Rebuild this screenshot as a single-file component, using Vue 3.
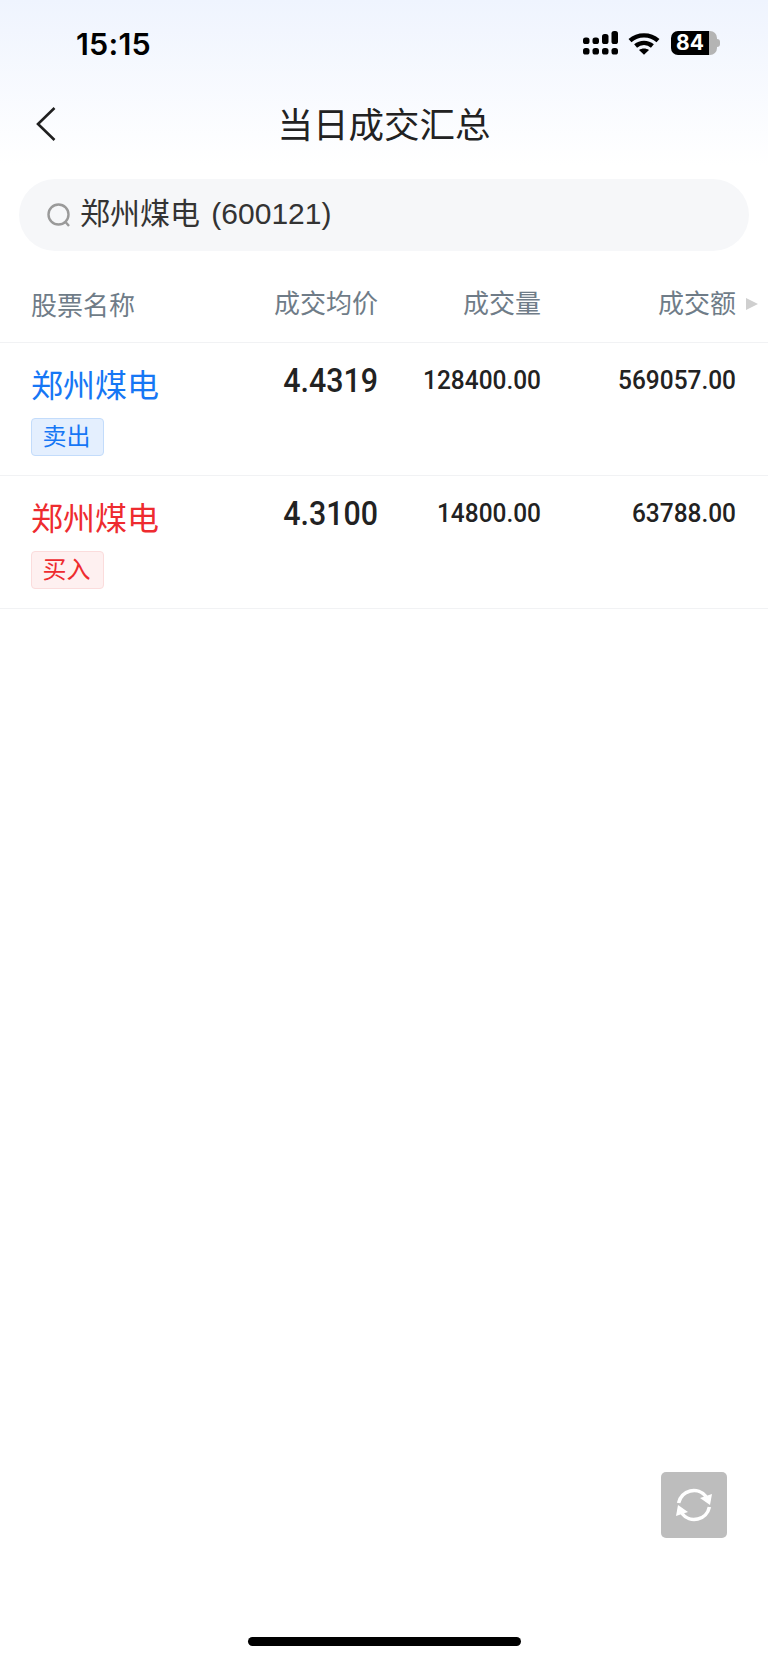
<script setup>
const columns = ["成交均价", "成交量", "成交额"];

const trades = [
  { id: 1, name: "郑州煤电", side: "卖出", type: "sell", price: "4.4319", volume: "128400.00", amount: "569057.00" },
  { id: 2, name: "郑州煤电", side: "买入", type: "buy", price: "4.3100", volume: "14800.00", amount: "63788.00" },
];
</script>

<template>
  <div class="page">
    <div class="status-bar">
      <span class="time">15:15</span>
      <div class="status-icons">
        <svg class="signal" width="36" height="24" viewBox="0 0 36 24" fill="#000">
          <rect x="0" y="6.5" width="6.5" height="6.5" rx="2.6" />
          <rect x="9.5" y="6.5" width="6.5" height="6.5" rx="2.6" />
          <rect x="19" y="3" width="6.5" height="10" rx="2.6" />
          <rect x="28.5" y="0" width="6.5" height="13" rx="2.6" />
          <rect x="0" y="17" width="6.5" height="6.5" rx="2.6" />
          <rect x="9.5" y="17" width="6.5" height="6.5" rx="2.6" />
          <rect x="19" y="17" width="6.5" height="6.5" rx="2.6" />
          <rect x="28.5" y="17" width="6.5" height="6.5" rx="2.6" />
        </svg>
        <svg class="wifi" width="32" height="23" viewBox="0 0 32 23" fill="none" stroke="#000" stroke-width="4.4">
          <path d="M2 8.6C9.8 1.6 22.2 1.6 30 8.6" />
          <path d="M7.6 14C12.4 9.8 19.6 9.8 24.4 14" />
          <path d="M16 22.8 L11 18 C14 16 18 16 21 18 Z" fill="#000" stroke="none" />
        </svg>
        <div class="battery">
          <span class="battery-level">84</span>
          <span class="battery-rest"></span>
          <span class="battery-nib"></span>
        </div>
      </div>
    </div>

    <div class="nav-bar">
      <svg class="back" width="22" height="36" viewBox="0 0 22 36" fill="none" stroke="#1f1f1f" stroke-width="2.6">
        <path d="M19.5 2 L3 18 L19.5 34" />
      </svg>
      <h1 class="nav-title">当日成交汇总</h1>
    </div>

    <div class="search-box">
      <svg width="26" height="26" viewBox="0 0 26 26" fill="none" stroke="#9a9a9a" stroke-width="2.4">
        <circle cx="12.5" cy="12.5" r="10" />
        <path d="M19.5 20 L23 24" />
      </svg>
      <span class="search-text">郑州煤电 (600121)</span>
    </div>

    <div class="table-row table-head">
      <span class="col-name">股票名称</span>
      <span v-for="col in columns" :key="col" class="col-num">{{ col }}</span>
      <span class="more-arrow"></span>
    </div>

    <div v-for="trade in trades" :key="trade.id" class="table-row trade-row">
      <div class="col-name" :class="trade.type">
        <div class="stock-name">{{ trade.name }}</div>
        <span class="side-tag">{{ trade.side }}</span>
      </div>
      <span class="col-num price">{{ trade.price }}</span>
      <span class="col-num value">{{ trade.volume }}</span>
      <span class="col-num value">{{ trade.amount }}</span>
    </div>

    <button class="refresh">
      <svg width="40" height="40" viewBox="0 0 40 40" fill="none" stroke="#fff" stroke-width="3.6">
        <path d="M4.6 18A15.5 15.5 0 0 1 32 11.5" />
        <path d="M35.4 22A15.5 15.5 0 0 1 8 28.5" />
        <path d="M38 9 L36 20 L26 13 Z" fill="#fff" stroke="none" />
        <path d="M2 31 L4 20 L14 27 Z" fill="#fff" stroke="none" />
      </svg>
    </button>

    <div class="home-indicator"></div>
  </div>
</template>

<style scoped>
.page {
  position: relative;
  height: 1662px;
  overflow: hidden;
  background: linear-gradient(180deg, #eff4fe 0, #ffffff 165px);
  font-family: "Liberation Sans", "Noto Sans CJK SC", sans-serif;
  color: #222;
}

.status-bar {
  height: 88px;
  display: flex;
  justify-content: space-between;
  align-items: flex-start;
  padding: 27px 51px 0 76px;
  box-sizing: border-box;
}

.time {
  font-family: Inter, "Liberation Sans", sans-serif;
  font-size: 30.5px;
  line-height: 34px;
  font-weight: 600;
  letter-spacing: 0.2px;
  color: #000;
}

.status-icons {
  display: flex;
  align-items: center;
  gap: 9px;
  margin-top: 4px;
}

.battery {
  position: relative;
  display: flex;
  width: 46px;
  height: 24px;
  margin-left: 2px;
}

.battery-level {
  width: 38px;
  background: #000;
  border-radius: 7px 0 0 7px;
  color: #fff;
  font-family: Inter, "Liberation Sans", sans-serif;
  font-size: 21px;
  font-weight: 700;
  line-height: 24px;
  text-align: center;
}

.battery-rest {
  width: 8px;
  background: #b4b4b4;
  border-radius: 0 7px 7px 0;
}

.battery-nib {
  position: absolute;
  right: -3px;
  top: 8px;
  width: 3px;
  height: 8px;
  background: #b4b4b4;
  border-radius: 0 3px 3px 0;
}

.nav-bar {
  position: relative;
  height: 72px;
  display: flex;
  align-items: center;
  justify-content: center;
}

.back {
  position: absolute;
  left: 35px;
  top: 18px;
}

.nav-title {
  margin: 0;
  padding-top: 4px;
  font-size: 35.5px;
  font-weight: 400;
  line-height: 72px;
  color: #222;
}

.search-box {
  margin: 19px 19px 0;
  height: 72px;
  display: flex;
  align-items: center;
  gap: 8px;
  padding-left: 27px;
  background: #f6f7f9;
  border-radius: 36px;
}

.search-text {
  margin-top: -2px;
  font-size: 30px;
  line-height: 40px;
  word-spacing: 3px;
  color: #333;
}

.table-row {
  position: relative;
  display: grid;
  grid-template-columns: 200px 147px 163px 195px;
  padding: 0 32px 0 31px;
  border-bottom: 1px solid #f1f2f4;
}

.table-head {
  height: 92px;
  padding-top: 10px;
  align-items: center;
  font-size: 26px;
  color: #6f7c88;
  box-sizing: border-box;
}

.table-head .col-name {
  margin-top: 4px;
}

.more-arrow {
  position: absolute;
  right: 10px;
  top: 47px;
  border-left: 12px solid #cfcfcf;
  border-top: 6px solid transparent;
  border-bottom: 6px solid transparent;
}

.trade-row {
  height: 133px;
  box-sizing: border-box;
  align-items: start;
}

.col-num {
  text-align: right;
}

.stock-name {
  margin-top: 22px;
  font-size: 32px;
  line-height: 42px;
}

.side-tag {
  display: block;
  width: 73px;
  height: 38px;
  margin-top: 11px;
  box-sizing: border-box;
  border-radius: 4px;
  border: 1px solid;
  padding-right: 2px;
  font-size: 24px;
  line-height: 35px;
  text-align: center;
}

.sell {
  color: #1677f5;
}

.sell .side-tag {
  background: #e4effe;
  border-color: #c3dcfb;
}

.buy {
  color: #ee2b2f;
}

.buy .side-tag {
  background: #fef0f0;
  border-color: #fbdcdc;
}

/* digits in the reference are narrower than Roboto */
.price,
.value {
  font-family: Roboto, "Liberation Sans", sans-serif;
  font-weight: 500;
  color: #222;
  transform-origin: right center;
}

.price {
  margin-top: 19px;
  font-size: 33px;
  line-height: 38px;
  transform: scaleX(0.92);
}

.value {
  margin-top: 22px;
  font-size: 26px;
  line-height: 30px;
  transform: scaleX(0.94);
}

.refresh {
  position: absolute;
  left: 661px;
  top: 1472px;
  width: 66px;
  height: 66px;
  padding: 0;
  display: flex;
  align-items: center;
  justify-content: center;
  border: none;
  border-radius: 5px;
  background: #bdbdbd;
}

.home-indicator {
  position: absolute;
  left: 248px;
  top: 1637px;
  width: 273px;
  height: 9px;
  border-radius: 5px;
  background: #000;
}
</style>
